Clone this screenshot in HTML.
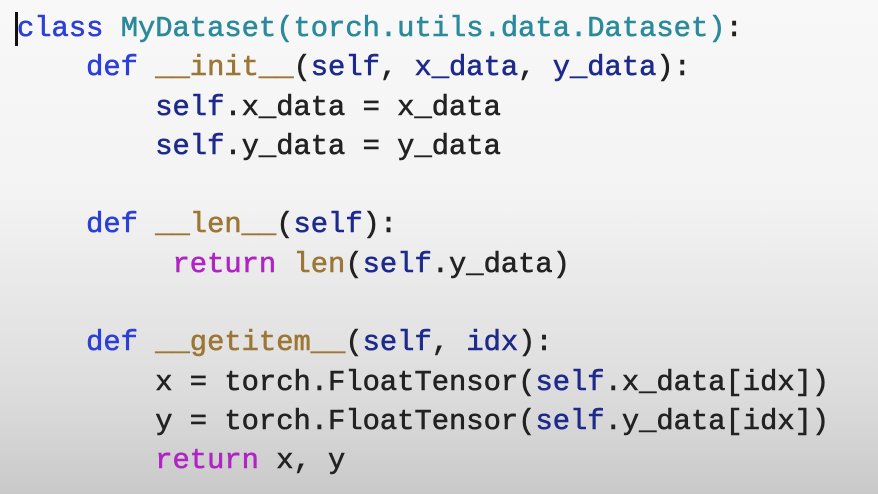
<!DOCTYPE html>
<html><head><meta charset="utf-8"><style>
html,body{margin:0;padding:0}
body{width:878px;height:494px;overflow:hidden;background:linear-gradient(to bottom,#f8f8f8 0%,#f3f3f3 40%,#dcdcdc 80%,#c9c9c9 100%);position:relative}
pre{position:absolute;left:17px;top:9px;margin:0;font-family:"Liberation Mono",monospace;font-size:28.8px;line-height:39.3px;color:#222;font-weight:normal;-webkit-text-stroke:0.6px currentColor;letter-spacing:0}
.k{color:#2c3fd6}.c{color:#2a8a9c}.d{color:#9c7634}.s{color:#1d2a8c}.r{color:#b024c4}
.cur{position:absolute;left:15px;top:12px;width:3px;height:34px;background:#111}
</style></head><body>
<div class="cur"></div>
<pre><span class="k">class</span> <span class="c">MyDataset(torch.utils.data.Dataset)</span>:
    <span class="k">def</span> <span class="d">__init__</span>(<span class="s">self</span>, <span class="s">x_data</span>, <span class="s">y_data</span>):
        <span class="s">self</span>.x_data = x_data
        <span class="s">self</span>.y_data = y_data

    <span class="k">def</span> <span class="d">__len__</span>(<span class="s">self</span>):
         <span class="r">return</span> <span class="d">len</span>(<span class="s">self</span>.y_data)

    <span class="k">def</span> <span class="d">__getitem__</span>(<span class="s">self</span>, <span class="s">idx</span>):
        x = torch.FloatTensor(<span class="s">self</span>.x_data[idx])
        y = torch.FloatTensor(<span class="s">self</span>.y_data[idx])
        <span class="r">return</span> x, y</pre>
</body></html>
